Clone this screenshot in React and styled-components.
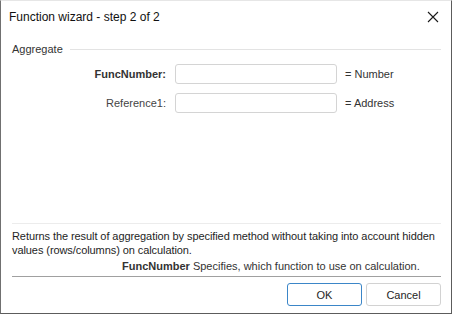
import styled, { createGlobalStyle } from 'styled-components'

const GlobalStyle = createGlobalStyle`
    html, body {
        margin: 0;
        padding: 0;
        background: #ffffff;
    }
    * {
        box-sizing: border-box;
    }
`

const params = [
    { name: 'FuncNumber', bold: true, type: 'Number' },
    { name: 'Reference1', bold: false, type: 'Address' },
]

export default function App() {
    return (
        <>
            <GlobalStyle />
            <Window>
                <TitleBar>
                    <Title>Function wizard - step 2 of 2</Title>
                    <CloseButton aria-label="Close">
                        <svg width="12" height="12" viewBox="0 0 12 12">
                            <path d="M1 1 L11 11 M11 1 L1 11" stroke="#1a1a1a" strokeWidth="1.1" fill="none" />
                        </svg>
                    </CloseButton>
                </TitleBar>
                <Content>
                    <GroupHeader>
                        <GroupTitle>Aggregate</GroupTitle>
                        <GroupLine />
                    </GroupHeader>
                    <ParamGrid>
                        {params.map((p) => (
                            <ParamRow key={p.name}>
                                <ParamLabel bold={p.bold}>{p.name}:</ParamLabel>
                                <ParamInput />
                                <ParamType>= {p.type}</ParamType>
                            </ParamRow>
                        ))}
                    </ParamGrid>
                    <Spacer />
                    <LightRule />
                    <Description>
                        Returns the result of aggregation by specified method without taking into account hidden values (rows/columns) on calculation.
                    </Description>
                    <ArgHelp>
                        <b>FuncNumber</b> Specifies, which function to use on calculation.
                    </ArgHelp>
                    <DarkRule />
                    <ButtonRow>
                        <DialogButton primary>OK</DialogButton>
                        <DialogButton>Cancel</DialogButton>
                    </ButtonRow>
                </Content>
            </Window>
        </>
    )
}

const Window = styled.div`
    width: 452px;
    height: 314px;
    display: flex;
    flex-direction: column;
    background: #ffffff;
    border-top: 1px solid #e6e6e6;
    border-left: 1px solid #707070;
    border-right: 1px solid #5c5c5c;
    border-bottom: 1px solid #5c5c5c;
    font-family: 'Liberation Sans', Arial, sans-serif;
    font-size: 11px;
    color: #1e1e1e;
`

const TitleBar = styled.div`
    height: 32px;
    display: flex;
    align-items: center;
    justify-content: space-between;
    padding-left: 8px;
    padding-right: 7px;
`

const Title = styled.div`
    font-size: 12px;
    color: #111111;
    padding-bottom: 1px;
`

const CloseButton = styled.div`
    width: 22px;
    height: 22px;
    display: flex;
    align-items: center;
    justify-content: center;
`

const Content = styled.div`
    flex: 1;
    display: flex;
    flex-direction: column;
    padding: 0 10px 7px 10px;
`

const GroupHeader = styled.div`
    display: flex;
    align-items: center;
    margin-top: 9px;
    height: 14px;
`

const GroupTitle = styled.div`
    padding-left: 1px;
    color: #333333;
`

const GroupLine = styled.div`
    flex: 1;
    height: 1px;
    background: #e3e3e3;
    margin-left: 7px;
`

const ParamGrid = styled.div`
    display: flex;
    flex-direction: column;
    gap: 9px;
    margin-top: 8px;
`

const ParamRow = styled.div`
    display: grid;
    grid-template-columns: 155px 162px auto;
    column-gap: 9px;
    align-items: center;
`

const ParamLabel = styled.div`
    text-align: right;
    font-weight: ${(p) => (p.bold ? 700 : 400)};
    color: ${(p) => (p.bold ? '#333333' : '#444444')};
`

const ParamInput = styled.div`
    height: 20px;
    border: 1px solid #d4d4d4;
    border-radius: 3px;
    background: #ffffff;
`

const ParamType = styled.div`
    color: #333333;
    margin-left: -1px;
`

const Spacer = styled.div`
    flex: 1;
`

const LightRule = styled.div`
    height: 1px;
    background: #ececec;
    margin: 0 0 5px 1px;
`

const Description = styled.div`
    line-height: 14px;
    color: #1e1e1e;
    padding-left: 1px;
    margin-right: -2px;
    letter-spacing: -0.08px;
`

const ArgHelp = styled.div`
    line-height: 14px;
    margin-top: 2px;
    padding-left: 111px;
    color: #333333;
    b {
        color: #333333;
    }
`

const DarkRule = styled.div`
    height: 1px;
    background: #a0a0a0;
    margin: 3px 0 0 1px;
`

const ButtonRow = styled.div`
    display: flex;
    justify-content: flex-end;
    gap: 4px;
    margin-top: 6px;
`

const DialogButton = styled.div`
    width: 75px;
    height: 23px;
    display: flex;
    align-items: center;
    justify-content: center;
    border-radius: 3px;
    border: 1px solid ${(p) => (p.primary ? '#3b86c8' : '#d2d2d2')};
    color: #1e1e1e;
    font-size: 11px;
`
